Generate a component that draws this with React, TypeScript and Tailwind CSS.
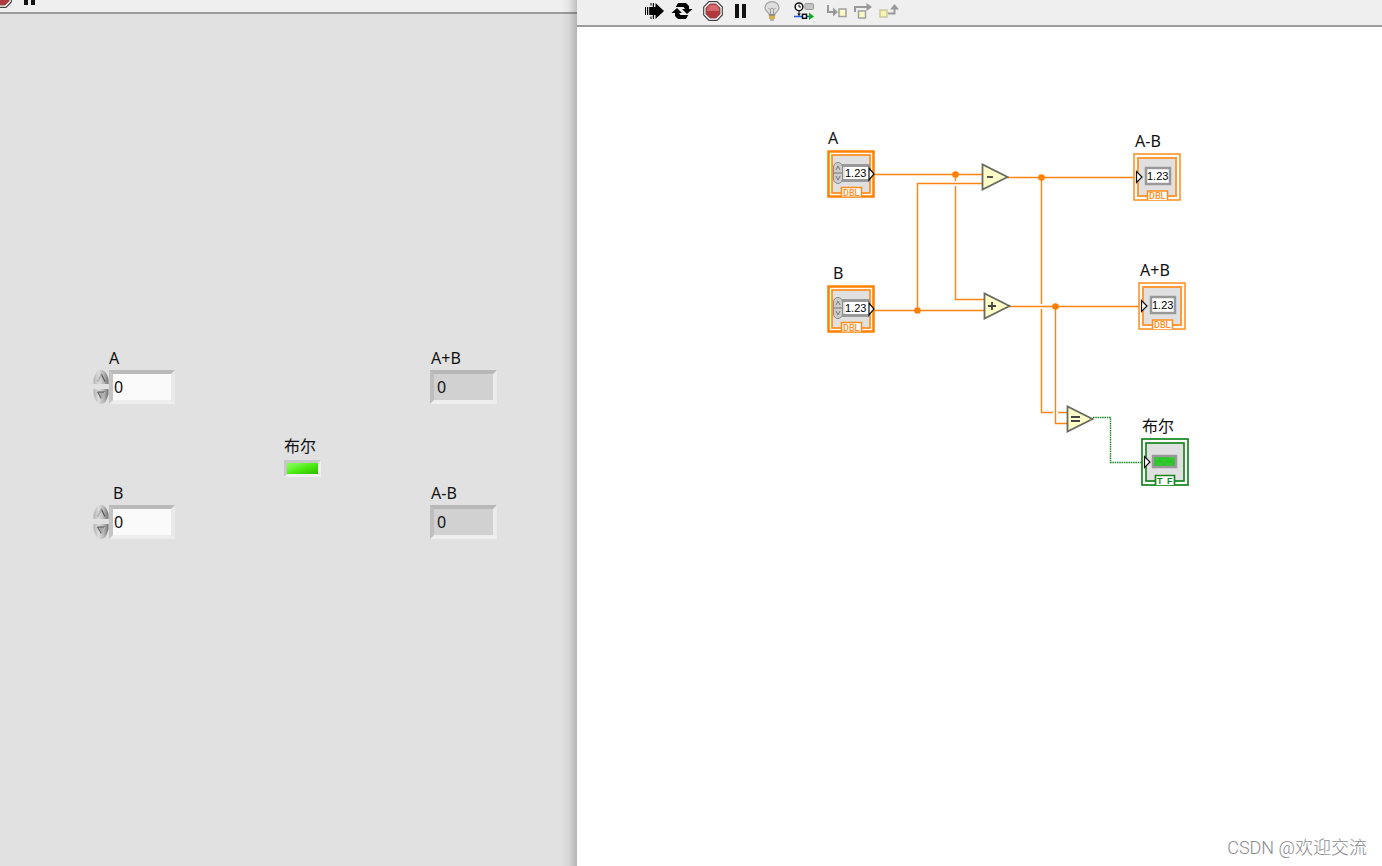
import { useState } from "react";
import type { ReactNode } from "react";

interface ToolButtonProps {
  label: string;
  narrow?: boolean;
  children: ReactNode;
}

function ToolButton({ label, narrow, children }: ToolButtonProps) {
  return (
    <button
      type="button"
      aria-label={label}
      className={`${narrow ? "w-[26px]" : "w-7"} flex h-[22px] shrink-0 items-center justify-center`}
    >
      {children}
    </button>
  );
}

function StopIcon() {
  return (
    <svg width="20" height="20" viewBox="0 0 20 20">
      <path d="M6 .7h8L19.3 6v8L14 19.3H6L.7 14V6z" fill="#fff" stroke="#444" strokeWidth="1.2" />
      <path d="M6.8 3h6.4L17 6.8v6.4L13.2 17H6.8L3 13.2V6.8z" fill="#b03a3e" stroke="#8f4a4c" />
      <path d="M7 4h6l3 3v3H4V7z" fill="#d4686b" />
    </svg>
  );
}

function PauseIcon() {
  return (
    <svg width="12" height="14" viewBox="0 0 12 14">
      <path d="M0 0h4v14H0zM7 0h4v14H7z" fill="#111" />
    </svg>
  );
}

function RunIcon() {
  return (
    <svg width="20" height="18" viewBox="0 0 20 18">
      <path d="M1 5h1v8H1zM3 5h1.200v8H3zM5.200 5h2v8h-2zM6.500 1h1v2.600h-1zM8.800 1h1.200v4H8.800zM6.500 14.400h1V17h-1zM8.800 13h1.200v4H8.800z" />
      <path d="M7 5h4.500V1l8.500 8-8.500 8v-4H7z" />
    </svg>
  );
}

function CycleIcon() {
  return (
    <svg width="22" height="18" viewBox="0 0 22 18">
      <path d="M4.500 5.500 7 1h8l3 3v3h3.500L16 12l-5-5h3l-1.500-2H4.500z" />
      <path d="M17.500 12.500 15 17H7l-3-3v-3H.5L6 6l5 5H8l1.500 2h8z" />
    </svg>
  );
}

function BulbIcon() {
  return (
    <svg width="16" height="20" viewBox="0 0 16 20" fill="none">
      <path
        d="M5.200 13.500C5 11 1 10.500 1 6.800a7 6.200 0 0 1 14 0c0 3.700-4 4.200-4.200 6.700z"
        fill="#dedede"
        stroke="#aaa"
        strokeWidth="1.400"
      />
      <path d="M4.500 7 6 8.500 8 7l2 1.500L11.500 7M6.500 8.500v5M9.500 8.500v5" stroke="#999" />
      <path d="M5 14h6v4H5z" fill="#d9ad4e" />
      <path d="M5 14h6M6 19h4" stroke="#777" />
    </svg>
  );
}

function RetainIcon() {
  return (
    <svg width="20" height="18" viewBox="0 0 20 18" fill="none">
      <circle cx="5" cy="4.800" r="3.900" fill="#fff" stroke="#111" strokeWidth="1.500" />
      <path d="M5 2.500V5h2M5 9v5" stroke="#111" />
      <rect x="11" y="1.500" width="8.500" height="6" rx="1" fill="#c4c4c4" stroke="#999" />
      <path d="M0 14.500h16" stroke="#2458f0" strokeWidth="1.500" />
      <path d="m3 11.500 2 2 2-2z" fill="#111" />
      <rect x="8.500" y="12.300" width="4" height="4" fill="#fff" stroke="#111" strokeWidth="1.500" />
      <path d="m15 10.500 5 4-5 3.500z" fill="#0bb01b" />
    </svg>
  );
}

function StepIntoIcon() {
  return (
    <svg width="20" height="14" viewBox="0 0 20 14">
      <path d="M1 1v7h5" fill="none" stroke="#999" strokeWidth="2" />
      <path d="m6 3.500 5 4.500-5 4.500z" fill="#999" />
      <rect x="12" y="5" width="7" height="7.500" fill="#fbf8c5" stroke="#a0a0a0" strokeWidth="1.500" />
    </svg>
  );
}

function StepOverIcon() {
  return (
    <svg width="18" height="16" viewBox="0 0 18 16">
      <path d="M1 9V4h12" fill="none" stroke="#999" strokeWidth="2" />
      <path d="m12.500 0 5.500 4-5.500 4z" fill="#999" />
      <rect x="4.500" y="8" width="7" height="7" fill="#fbf8c5" stroke="#a0a0a0" strokeWidth="1.500" />
    </svg>
  );
}

function StepOutIcon() {
  return (
    <svg width="20" height="14" viewBox="0 0 20 14">
      <path d="M9 9.500h6.500V4" fill="none" stroke="#999" strokeWidth="2" />
      <path d="M11 5.500 15.500 0 20 5.500z" fill="#999" />
      <rect x="1" y="6" width="7" height="7" fill="#f7f4ae" stroke="#c9c8a0" strokeWidth="1.500" />
    </svg>
  );
}

function Spinner({ onStep }: { onStep: (by: number) => void }) {
  return (
    <div className="flex w-4 flex-col">
      <button type="button" aria-label="Increment" onClick={() => onStep(1)} className="h-[17px]">
        <svg width="16" height="17" viewBox="0 0 16 17">
          <path d="M.5 14V9C2 4 4 0 8 0s6 4 7.500 9v5z" fill="url(#metal)" />
          <path d="m4.500 11.500 4-7 3.500 7" fill="none" stroke="#555" strokeWidth="1.200" />
          <path d="m4.500 11.500 4-7" stroke="#fff" strokeWidth=".7" />
        </svg>
      </button>
      <button type="button" aria-label="Decrement" onClick={() => onStep(-1)} className="h-[17px]">
        <svg width="16" height="17" viewBox="0 0 16 17">
          <path d="M.5 2v5C2 13 4 17 8 17s6-4 7.500-10V2z" fill="url(#metal)" />
          <path d="M4.500 5H12l-3.500 7z" fill="#aaa" stroke="#555" />
          <path d="m12 5-3.500 7" stroke="#fff" strokeWidth=".7" />
        </svg>
      </button>
    </div>
  );
}

interface NumericProps {
  id: string;
  label: string;
  labelClass: string;
  value: number;
  onChange: (value: number) => void;
}

function NumericControl({ id, label, labelClass, value, onChange }: NumericProps) {
  return (
    <div>
      <label htmlFor={id} className={`block leading-6 ${labelClass}`}>
        {label}
      </label>
      <div className="flex">
        <Spinner onStep={(by) => onChange(value + by)} />
        <input
          id={id}
          value={value}
          onChange={(event) => onChange(Number(event.target.value) || 0)}
          className="h-[34px] w-[66px] border-4 border-t-[#bababa] border-r-[#e9e9e9] border-b-[#ededed] border-l-[#c4c4c4] bg-[#fafafa] px-px outline-none"
        />
      </div>
    </div>
  );
}

function NumericIndicator({ id, label, value }: { id: string; label: string; value: number }) {
  return (
    <div>
      <label htmlFor={id} className="block pl-px leading-6">
        {label}
      </label>
      <input
        id={id}
        value={value}
        readOnly
        className="block h-[34px] w-[67px] border-4 border-t-[#b8b8b8] border-r-[#ebebeb] border-b-[#eee] border-l-[#bebebe] bg-[#d1d1d1] px-[3px] outline-none"
      />
    </div>
  );
}

function ControlTerminal() {
  return (
    <svg width="48" height="48" viewBox="0 0 48 48" className="block">
      <rect x="1.500" y="1.500" width="45" height="45" fill="#fff" stroke="#ff8000" strokeWidth="2.500" />
      <rect x="5" y="5" width="38" height="38" fill="#e0e0e0" stroke="#ff8c1a" strokeWidth="1.700" />
      <path d="M15 14h28v3H15zM15 29h28v3H15z" fill="#999" />
      <rect x="6.500" y="12.500" width="9" height="21" rx="4.500" fill="#ccc" stroke="#8c8c8c" />
      <path d="m9 20 2-4 2 4M9 26l2 4 2-4M7 23h8" fill="none" stroke="#777" />
      <rect x="18" y="17" width="24" height="12" fill="#fff" />
      <text x="18" y="27" fontSize="11" className="font-['Liberation_Sans']">1.23</text>
      <path d="M42 18v12l5-6z" fill="#fff" stroke="#111" strokeWidth="1.200" />
      <path d="M14.500 46.500V37.500h20v9" fill="#fff" stroke="#ff8c1a" strokeWidth="1.500" />
      <text x="16" y="45.500" fontSize="9" fill="#ff8c1a" className="font-['Roboto'] font-medium">DBL</text>
    </svg>
  );
}

function IndicatorTerminal() {
  return (
    <svg width="48" height="48" viewBox="0 0 48 48" className="block">
      <rect x="1" y="1" width="46" height="46" fill="#fff" stroke="#ff8c1a" strokeWidth="1.500" />
      <rect x="5" y="5" width="38" height="38" fill="#e0e0e0" stroke="#ff9a38" strokeWidth="2" />
      <rect x="13" y="15" width="24" height="16" fill="#fff" stroke="#999" strokeWidth="2.500" />
      <text x="14" y="27" fontSize="11" className="font-['Liberation_Sans']">1.23</text>
      <path d="M3.500 18.500v11L9 24z" fill="#fff" stroke="#111" strokeWidth="1.200" />
      <path d="M14.500 47v-9h20v9" fill="#fff" stroke="#ff8c1a" strokeWidth="1.500" />
      <text x="16" y="46" fontSize="9" fill="#ff8c1a" className="font-['Roboto'] font-medium">DBL</text>
    </svg>
  );
}

function BooleanTerminal() {
  return (
    <svg width="48" height="48" viewBox="0 0 48 48" className="block">
      <rect x="1" y="1" width="46" height="46" fill="#fff" stroke="#16861e" strokeWidth="1.700" />
      <rect x="5" y="5" width="38" height="38" fill="#e0e0e0" stroke="#16861e" strokeWidth="1.700" />
      <rect x="12" y="18" width="23" height="11" fill="#2cc42c" stroke="#999" strokeWidth="2.500" />
      <path d="M14 21h4M21 22h5M28 20h5M16 26h6M25 26h6" stroke="#3bd636" />
      <path d="M3.500 18.500v11L9 24z" fill="#fff" stroke="#111" strokeWidth="1.200" />
      <path d="M14.500 47V37.500h19V47" fill="#fff" stroke="#16861e" strokeWidth="1.700" />
      <text x="16" y="46" fontSize="9" fill="#16861e" className="font-['Liberation_Sans'] font-bold">T</text>
      <text x="26" y="46" fontSize="9" fill="#16861e" className="font-['Liberation_Sans'] font-bold">F</text>
    </svg>
  );
}

// Triangular function node, the mark is a path inside the body
function Operator({ mark }: { mark: string }) {
  return (
    <svg width="28" height="28" viewBox="0 0 28 28" className="block">
      <path d="M1.500 1.500v25L26.500 14z" fill="#ffffca" stroke="#6a6a62" strokeWidth="1.800" />
      <path d={mark} stroke="#444" strokeWidth="1.800" />
    </svg>
  );
}

function Wires() {
  return (
    <svg className="absolute inset-0 h-full w-full" fill="none">
      <g stroke="#ff8412" strokeWidth="1.400">
        <path d="M297 147.500H406M297 283.500H408" />
        <path d="M340.500 283.500V156.500H406" />
        <path d="M378.500 147.500V154M378.500 159V272.500H408" />
        <path d="M430 150.500H558M432 279.500H563" />
        <path d="M464.500 150.500V277M464.500 282V385.500H476M481 385.500H491" />
        <path d="M478.500 279.500V396.500H491" />
      </g>
      <g fill="#ff8000">
        <circle cx="378.500" cy="147.500" r="3.300" />
        <circle cx="340.500" cy="283.500" r="3.300" />
        <circle cx="464.500" cy="150.500" r="3.300" />
        <circle cx="478.500" cy="279.500" r="3.300" />
      </g>
      <path d="M516 390.500H533.500V435.500H566" stroke="#16861e" strokeWidth="1.400" strokeDasharray="1.500 .8" />
    </svg>
  );
}

export default function App() {
  const [a, setA] = useState(0);
  const [b, setB] = useState(0);
  const equal = a + b === a - b;

  return (
    <main className="relative grid min-h-screen grid-cols-[577fr_805fr] overflow-hidden font-['Noto_Sans','Noto_Sans_CJK_SC',sans-serif] text-base text-[#111]">
      <svg className="absolute h-0 w-0">
        <defs>
          <linearGradient id="metal">
            <stop offset="0" stopColor="#b4b4b4" />
            <stop offset=".35" stopColor="#ddd" />
            <stop offset=".7" stopColor="#b4b4b4" />
            <stop offset="1" stopColor="#707070" />
          </linearGradient>
        </defs>
      </svg>

      <section aria-label="Front panel" className="relative flex flex-col bg-[#e1e1e1]">
        <header className="h-[14px] overflow-hidden border-b-2 border-[#9c9c9c] bg-[#efefef]">
          <div className="-mt-[13px] -ml-3 flex">
            <ToolButton label="Abort"><StopIcon /></ToolButton>
            <ToolButton label="Pause"><PauseIcon /></ToolButton>
          </div>
        </header>
        <div className="relative flex-1">
          <div className="absolute top-[332px] left-[93px]">
            <NumericControl id="a" label="A" labelClass="pl-4" value={a} onChange={setA} />
          </div>
          <div className="absolute top-[467px] left-[93px]">
            <NumericControl id="b" label="B" labelClass="pl-5" value={b} onChange={setB} />
          </div>
          <div className="absolute top-[332px] left-[430px]">
            <NumericIndicator id="sum" label="A+B" value={a + b} />
          </div>
          <div className="absolute top-[467px] left-[430px]">
            <NumericIndicator id="difference" label="A-B" value={a - b} />
          </div>
          <div className="absolute top-[418px] left-[284px]">
            <p className="leading-7">布尔</p>
            <div className="h-[17px] w-[37px] border-[3px] border-t-[#c6c6c6] border-r-[#f0f0f0] border-b-[#f0f0f0] border-l-[#c6c6c6]">
              <div
                className={`h-full ${
                  equal ? "bg-linear-to-br from-[#8dff5c] via-[#4ded12] to-[#2fb800]" : "bg-[#1e4d0c]"
                }`}
              />
            </div>
          </div>
        </div>
        <div className="pointer-events-none absolute inset-y-0 right-0 w-4 bg-linear-to-r from-transparent via-black/5 to-black/20" />
      </section>

      <section aria-label="Block diagram" className="flex flex-col bg-white">
        <header className="flex h-[27px] border-b-2 border-[#9c9c9c] bg-[#efefef] pl-[63px]">
          <div className="flex">
            <ToolButton label="Run"><RunIcon /></ToolButton>
            <ToolButton label="Run continuously"><CycleIcon /></ToolButton>
          </div>
          <div className="ml-[3px] flex">
            <ToolButton label="Abort"><StopIcon /></ToolButton>
            <ToolButton label="Pause"><PauseIcon /></ToolButton>
          </div>
          <div className="ml-[3px] flex gap-1">
            <ToolButton label="Highlight execution"><BulbIcon /></ToolButton>
            <ToolButton label="Retain wire values"><RetainIcon /></ToolButton>
          </div>
          <div className="ml-1.5 flex">
            <ToolButton narrow label="Step into"><StepIntoIcon /></ToolButton>
            <ToolButton narrow label="Step over"><StepOverIcon /></ToolButton>
            <ToolButton narrow label="Step out"><StepOutIcon /></ToolButton>
          </div>
        </header>
        <div className="relative flex-1">
          <Wires />
          <div className="absolute top-[99px] left-[250px]">
            <p className="pl-px leading-6">A</p>
            <ControlTerminal />
          </div>
          <div className="absolute top-[234px] left-[250px]">
            <p className="pl-1.5 leading-6">B</p>
            <ControlTerminal />
          </div>
          <div className="absolute top-[136px] left-[404px]">
            <Operator mark="M6 14h6" />
          </div>
          <div className="absolute top-[265px] left-[406px]">
            <Operator mark="M5 14h8M9 10v8" />
          </div>
          <div className="absolute top-[378px] left-[489px]">
            <Operator mark="M5 12h9M5 16h9" />
          </div>
          <div className="absolute top-[102px] left-[556px]">
            <p className="pl-0.5 leading-6">A-B</p>
            <IndicatorTerminal />
          </div>
          <div className="absolute top-[231px] left-[561px]">
            <p className="pl-0.5 leading-6">A+B</p>
            <IndicatorTerminal />
          </div>
          <div className="absolute top-[387px] left-[564px]">
            <p className="pl-px leading-6">布尔</p>
            <BooleanTerminal />
          </div>
          <p className="absolute right-[15px] bottom-1 font-['Roboto','Noto_Sans_CJK_SC',sans-serif] text-lg font-light text-[#8c8c8c]">
            CSDN @欢迎交流
          </p>
        </div>
      </section>
    </main>
  );
}
